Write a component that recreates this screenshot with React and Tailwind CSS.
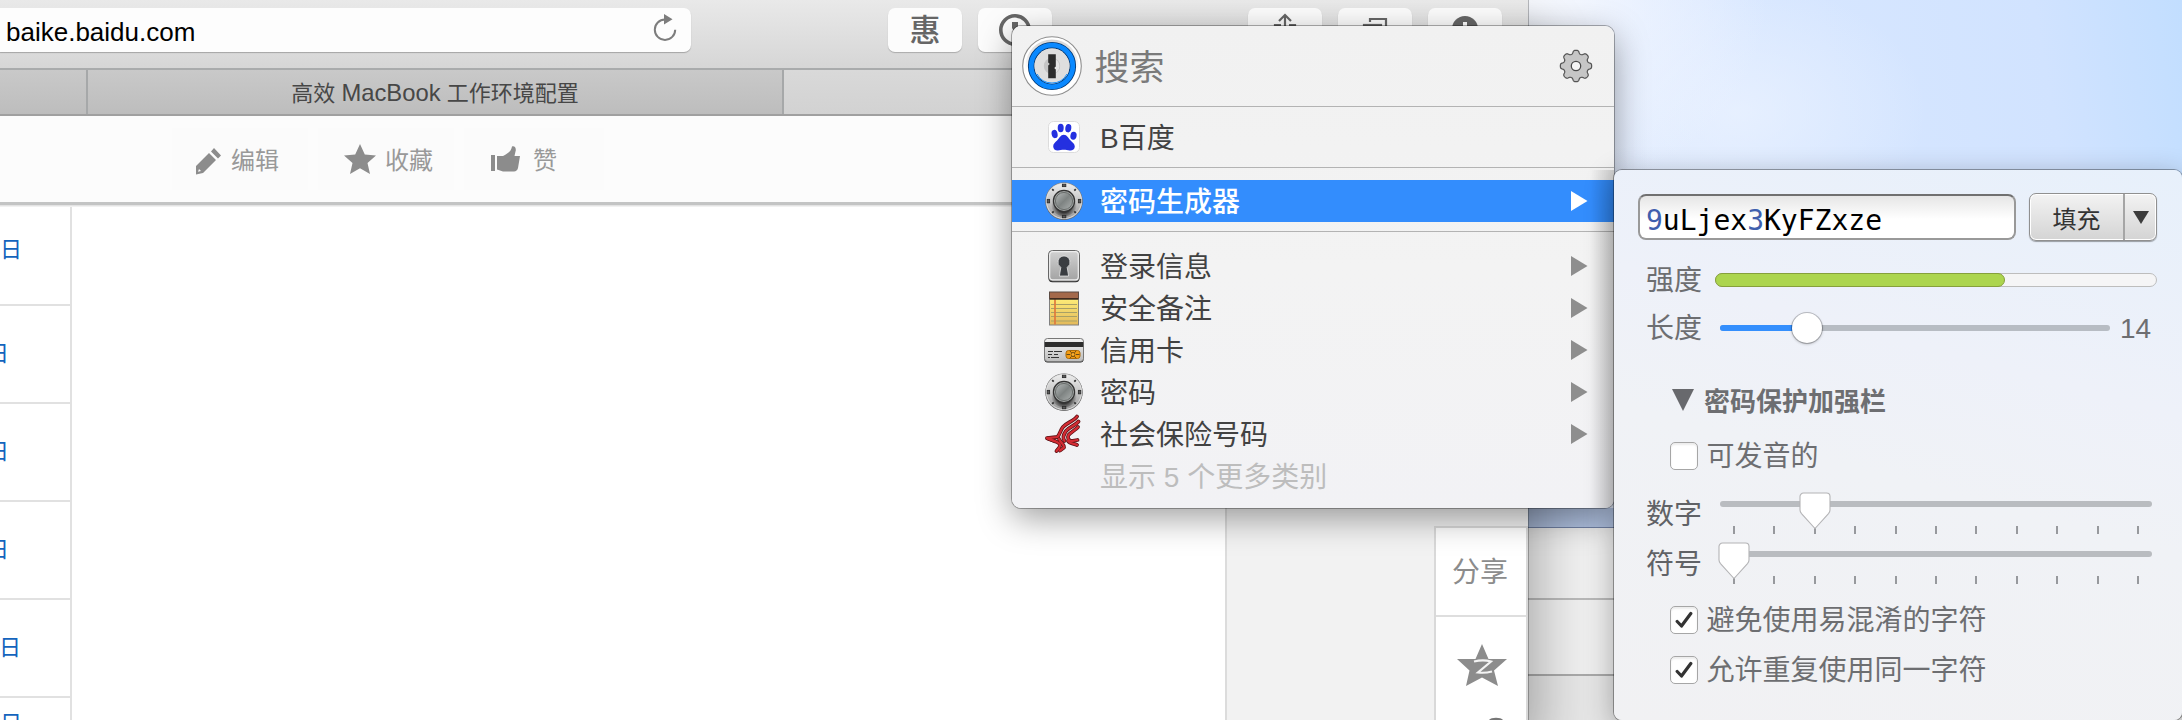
import React from 'react';

const DialIcon = () => (
  <svg width="40" height="40" viewBox="0 0 40 40">
    <defs>
      <linearGradient id="dialRim" x1="0" y1="0" x2="0" y2="1">
        <stop offset="0" stopColor="#ededed" />
        <stop offset="0.5" stopColor="#c6c6c6" />
        <stop offset="1" stopColor="#9a9a9a" />
      </linearGradient>
      <radialGradient id="dialShade" cx="0.5" cy="0.6" r="0.5">
        <stop offset="0.5" stopColor="#222" stopOpacity="0.85" />
        <stop offset="1" stopColor="#444" stopOpacity="0" />
      </radialGradient>
      <linearGradient id="dialKnob" x1="0" y1="0" x2="1" y2="1">
        <stop offset="0" stopColor="#b5b9b9" />
        <stop offset="0.5" stopColor="#7e8382" />
        <stop offset="1" stopColor="#adb1b0" />
      </linearGradient>
    </defs>
    <circle cx="20" cy="20.400" r="18.600" fill="#555" />
    <circle cx="20" cy="20" r="18.600" fill="#8f8f8f" />
    <circle cx="20" cy="20" r="17.600" fill="url(#dialRim)" stroke="#efefef" strokeWidth="0.8" />
    <ellipse cx="20" cy="23" rx="13" ry="12.500" fill="url(#dialShade)" />
    <g fill="#5a5a5a" stroke="#2e2e2e" strokeWidth="0.9">
      <rect x="18.400" y="3.200" width="3.400" height="2.400" />
      <rect x="18.400" y="34.400" width="3.400" height="2.400" />
      <rect x="3.200" y="18.400" width="2.400" height="3.400" />
      <rect x="34.400" y="18.400" width="2.400" height="3.400" />
    </g>
    <g stroke="#333" strokeWidth="1.800">
      <path d="M8.200 8.200l1.500 1.500M31.800 8.200L30.300 9.700M8.200 31.800L9.700 30.300M31.800 31.800L30.300 30.300" />
    </g>
    <circle cx="20" cy="20" r="10.600" fill="#a0a4a3" stroke="#333" strokeWidth="1.200" />
    <circle cx="20" cy="20" r="8.600" fill="url(#dialKnob)" stroke="#5d6160" strokeWidth="0.8" />
  </svg>
);

const LoginIcon = () => (
  <svg width="40" height="40" viewBox="0 0 40 40">
    <defs>
      <linearGradient id="loginBg" x1="0" y1="0" x2="0" y2="1">
        <stop offset="0" stopColor="#d2d2d2" />
        <stop offset="1" stopColor="#a2a2a2" />
      </linearGradient>
    </defs>
    <rect x="4.5" y="5.2" width="31" height="31" rx="4" fill="#222" />
    <rect x="4.5" y="4.5" width="31" height="30.6" rx="4" fill="url(#loginBg)" stroke="#666" />
    <rect x="5.7" y="5.7" width="28.6" height="28.2" rx="3" fill="none" stroke="#eee" strokeWidth="1.2" />
    <path d="M20 10a6.2 6.2 0 0 1 3.2 11.4L24.6 30h-9.2l1.4-8.6A6.2 6.2 0 0 1 20 10z" fill="#3a3d41" stroke="#f2f2f2" strokeWidth="0.7" />
  </svg>
);

const NoteIcon = () => (
  <svg width="40" height="40" viewBox="0 0 40 40">
    <defs>
      <linearGradient id="notePaper" x1="0" y1="0" x2="0" y2="1">
        <stop offset="0" stopColor="#fff07a" />
        <stop offset="1" stopColor="#e3b95b" />
      </linearGradient>
    </defs>
    <rect x="5.5" y="9" width="29" height="28" fill="url(#notePaper)" stroke="#808080" />
    <path d="M7 16.5h26M7 20.5h26M7 24.5h26M7 28.5h26M7 33h26" stroke="#a8a066" />
    <path d="M11 11v25.500" stroke="#e07a3c" strokeWidth="1.7" />
    <rect x="5.5" y="4" width="29" height="7" fill="#a4694b" stroke="#5b4a42" />
    <path d="M6 10.8h28" stroke="#2b1d15" strokeWidth="1.2" />
  </svg>
);

const CardIcon = () => (
  <svg width="40" height="40" viewBox="0 0 40 40">
    <defs>
      <linearGradient id="cardBg" x1="0" y1="0" x2="0" y2="1">
        <stop offset="0" stopColor="#f3f3f3" />
        <stop offset="1" stopColor="#bcbcbc" />
      </linearGradient>
    </defs>
    <rect x="0.5" y="9.500" width="39" height="23" rx="3" fill="#222" />
    <rect x="0.5" y="8.500" width="39" height="23" rx="3" fill="url(#cardBg)" stroke="#777" />
    <rect x="0.8" y="12" width="38.400" height="5" fill="#2d2d2d" />
    <path d="M4 21.500h5m1 0h8M4 24.500h4m2 0h4M4 27.500h2m1 0h8" stroke="#333" strokeWidth="1.200" />
    <rect x="22" y="20.500" width="14" height="8" rx="2.500" fill="#f39c12" stroke="#ad6b07" />
    <path d="M22.500 24.500h3.500m6 0h3.500M26 21l1.500 1.800h3L32 21M26 28.200l1.500-1.800h3l1.500 1.800" stroke="#6b4c18" strokeWidth="1" fill="none" />
    <circle cx="29" cy="24.500" r="1.900" fill="#ffb02e" stroke="#5e3c06" strokeWidth="0.7" />
  </svg>
);

const EAGLE_LINES = [
  'M33 2.500C30 7 23 8.500 19 13c-2.500 3-3 7-5.500 10L3 24.200l8 3',
  'M34.500 7.500C31 12 25 13 22 17c-3 4-3.500 7-1.500 10',
  'M34 13c-3 3.500-7 5-9.500 8-1.500 3 0 5.500 3 6.200l6-1.200',
  'M4 24.500L13 28c3 1.500 4 3 2 6l-2.500 3',
  'M15 25c2 4 5 5 5 8.500l-4 3M24 27c2 3 6 2.500 9 4',
];

const EagleIcon = () => (
  <svg width="40" height="40" viewBox="0 0 40 40">
    <g fill="none" strokeLinecap="round" strokeLinejoin="round">
      {EAGLE_LINES.map((d) => (
        <path key={d} d={d} stroke="#5d1216" strokeWidth="3.800" />
      ))}
      {EAGLE_LINES.map((d) => (
        <path key={d} d={d} stroke="#d42c33" strokeWidth="2.200" />
      ))}
    </g>
  </svg>
);

const PawIcon = () => (
  <svg width="32" height="32" viewBox="0 0 32 32">
    <rect x="0.5" y="0.5" width="31" height="31" rx="5" fill="#fff" stroke="#dcdcdc" />
    <g fill="#2430e0">
      <ellipse cx="12.700" cy="7" rx="3" ry="4.200" />
      <ellipse cx="20.300" cy="7.200" rx="3" ry="4.200" transform="rotate(8 20.3 7.200)" />
      <ellipse cx="6.600" cy="13" rx="3" ry="4.200" transform="rotate(-12 6.600 13)" />
      <ellipse cx="25.500" cy="14.800" rx="3.100" ry="4" transform="rotate(10 25.500 14.800)" />
      <path d="M15.800 13.800c3.400 0 4.200 3.200 6.800 5.600 2 2 4.200 3.400 4.200 6.100 0 3-2.500 4.200-5 4-2.300-.2-3.800-.7-6-.7s-3.900.7-6 .7c-2.800 0-4.600-1.400-4.600-4.200 0-2.700 2-4 3.900-5.900 2.500-2.400 3.400-5.600 6.700-5.600z" />
    </g>
  </svg>
);

const OnePasswordIcon = () => (
  <svg width="62" height="62" viewBox="0 0 62 62">
    <defs>
      <linearGradient id="opRim" x1="0" y1="0" x2="0" y2="1">
        <stop offset="0" stopColor="#d4d4d4" />
        <stop offset="0.6" stopColor="#fff" />
        <stop offset="1" stopColor="#fff" />
      </linearGradient>
    </defs>
    <circle cx="31" cy="31" r="29.300" fill="#fff" stroke="#8e8e8e" strokeWidth="1.100" />
    <circle cx="31" cy="31" r="26.500" fill="url(#opRim)" />
    <circle cx="31" cy="31" r="20.800" fill="#e2e2e2" stroke="#063a74" strokeWidth="6.600" />
    <circle cx="31" cy="31" r="20.800" fill="none" stroke="#0a89ff" strokeWidth="4.800" />
    <circle cx="31" cy="31" r="17.500" fill="#dedede" />
    <path d="M16 39a17 17 0 0 0 30 0" fill="none" stroke="#1690ff" strokeWidth="1" />
    <circle cx="31" cy="31" r="8.200" fill="#c4c4c4" />
    <path d="M31 23.500a7.500 7.500 0 0 1 0 15z" fill="#e4e4e4" />
    <path d="M27.200 19.200h7.600v12.300l-1.600 1.500 1.600 1.500v8.700h-7.600V30.500l1.600-1.500-1.600-1.500z" fill="#2c2c2c" />
  </svg>
);

const GearIcon = () => {
  const pts = [];
  for (let i = 0; i < 160; i += 1) {
    const a = (i / 160) * Math.PI * 2;
    const r = 14 + 1.700 * Math.tanh(1.800 * Math.cos(8 * a) + 0.3);
    pts.push(`${(17 + r * Math.sin(a)).toFixed(2)},${(17 - r * Math.cos(a)).toFixed(2)}`);
  }
  return (
    <svg width="34" height="34" viewBox="0 0 34 34">
      <polygon points={pts.join(' ')} fill="#c6c6c6" stroke="#555" strokeWidth="1.200" strokeLinejoin="round" />
      <circle cx="17" cy="17" r="4.700" fill="#f4f4f4" stroke="#4a4a4a" strokeWidth="1.300" />
    </svg>
  );
};

const ToolButton = ({ children }) => (
  <div className="flex h-11 w-[74px] justify-center rounded-[7px] bg-[#fcfcfc] shadow-[0_1px_1px_rgba(0,0,0,0.22)]">{children}</div>
);

const SafariToolbar = () => (
  <div className="flex h-[70px] items-start border-b-2 border-[#a9abac] bg-gradient-to-b from-[#e9e9e9] to-[#d6d6d6] pt-2">
    <div className="flex h-11 w-[691px] items-center justify-between rounded-r-[7px] bg-[#fdfdfd] pr-[13px] pl-[6px] shadow-[0_1px_1px_rgba(0,0,0,0.25)]">
      <span className="pt-[3px] text-[26px] leading-none text-black">baike.baidu.com</span>
      <svg className="-mt-1" width="26" height="30" viewBox="0 0 26 30" fill="none">
        <path d="M13 6.500a10.200 10.200 0 1 0 10.200 10.200" stroke="#7d7d7d" strokeWidth="2" />
        <path d="M12 1v10.500l8.500-5.200z" fill="#7d7d7d" />
      </svg>
    </div>
    <div className="ml-[197px] flex gap-4">
      <ToolButton>
        <span className="pt-[6px] text-[31px] leading-[34px] font-medium text-[#666]">惠</span>
      </ToolButton>
      <ToolButton>
        <svg width="36" height="44" viewBox="0 0 36 44">
          <circle cx="18" cy="22" r="14.200" fill="none" stroke="#666" strokeWidth="3.600" />
          <path d="M15 14h6v7l-1.500 1.500L21 24v6h-6v-6l1.500-1.500L15 20z" fill="#666" />
        </svg>
      </ToolButton>
    </div>
    <div className="ml-[196px] flex gap-4">
      <ToolButton>
        <svg width="30" height="44" viewBox="0 0 30 44" fill="none" stroke="#666" strokeWidth="2.200">
          <path d="M15 7v20M9 13l6-6 6 6M11 17H5v15h20V17h-6" />
        </svg>
      </ToolButton>
      <ToolButton>
        <svg width="30" height="44" viewBox="0 0 30 44" fill="none" stroke="#666" strokeWidth="2.200">
          <rect x="4" y="17" width="17" height="15" />
          <path d="M10 14v-3h16v14h-4" />
        </svg>
      </ToolButton>
      <ToolButton>
        <svg width="30" height="44" viewBox="0 0 30 44">
          <circle cx="15" cy="21" r="13" fill="#666" />
          <path d="M13 14h4v8h4l-6 6-6-6h4z" fill="#fff" />
        </svg>
      </ToolButton>
    </div>
  </div>
);

const TabBar = () => (
  <div className="flex h-[46px] border-b-2 border-[#a0a0a0] bg-gradient-to-b from-[#c9c9c9] to-[#bdbdbd]">
    <div className="w-[88px] border-r-2 border-[#a6a8a9]" />
    <div className="flex w-[696px] items-center justify-center border-r-2 border-[#a6a8a9] pt-[2px] text-[22px] text-[#474747]">
      <span>
        高效 <span className="text-[23.800px]">MacBook</span> 工作环境配置
      </span>
    </div>
    <div className="flex-1 bg-gradient-to-b from-[#d9d9d9] to-[#d2d2d2]" />
  </div>
);

const PageActions = () => (
  <div className="flex h-[86px] items-center gap-[10px] bg-[#fcfcfc] pl-[172px] text-[24px] text-[#999]">
    <div className="flex h-[62px] w-[136px] items-center gap-[9px] bg-[#fbfbfb] pt-[3px] pl-[22px]">
      <svg width="28" height="28" viewBox="0 0 28 28" fill="#8c8c8c">
        <path d="M2 19L15 6l7 7L9 26l-7 1.500zM17 4.500l3-3.500 7 7.500-3 3z" />
        <path d="M5 22l2 2-3 .8z" fill="#fafafa" />
      </svg>
      <span>编辑</span>
    </div>
    <div className="flex h-[62px] w-[136px] items-center gap-[9px] bg-[#fbfbfb] pt-[3px] pl-[26px]">
      <svg className="-mt-[3px]" width="32" height="30" viewBox="0 0 32 30" fill="#8c8c8c">
        <path d="M16 0l4.800 10.500L32 11.600l-8.500 7.500L26 30l-10-5.800L6 30l2.500-10.900L0 11.600l11.200-1.100z" />
      </svg>
      <span>收藏</span>
    </div>
    <div className="flex h-[62px] w-[140px] items-center gap-[13px] bg-[#fbfbfb] pt-[3px] pl-[27px]">
      <svg className="-mt-[3px]" width="29" height="28" viewBox="0 0 29 28" fill="#8c8c8c">
        <path d="M0 10h4v16H0zM6 11h6c4-2 8-4 9-9.500 3-1 4.500 2 3.500 5L23.500 11H29l-2 12c-.5 2-2 3.500-4 3.500H12l-6-2z" />
      </svg>
      <span>赞</span>
    </div>
  </div>
);

const DateCell = ({ height, pad, left }) => (
  <div className={`flex shrink-0 overflow-hidden border-b-2 border-[#e1e1e1] text-[22px] leading-[26px] text-[#1464bd] ${height} ${pad}`}>
    <span className={left}>日</span>
  </div>
);

const BrowserWindow = () => (
  <div className="relative z-10 flex h-[720px] w-[1528px] shrink-0 flex-col overflow-hidden bg-white shadow-[0_0_0_1px_rgba(0,0,0,0.25),10px_30px_50px_rgba(0,0,0,0.3)]">
    <SafariToolbar />
    <TabBar />
    <PageActions />
    <div className="h-[3px] shrink-0 bg-[#c3c4c4]" />
    <div className="h-[2px] shrink-0 bg-gradient-to-b from-[#dcdcdc] to-[#f8f8f8]" />
    <div className="flex min-h-0 flex-1">
      <div className="flex w-[72px] shrink-0 flex-col overflow-hidden border-r-2 border-[#e1e1e1]">
        <DateCell height="h-[99px]" pad="pt-[30px]" left="" />
        <DateCell height="h-[98px]" pad="pt-[35px]" left="-ml-[13px]" />
        <DateCell height="h-[98px]" pad="pt-[35px]" left="-ml-[13px]" />
        <DateCell height="h-[98px]" pad="pt-[35px]" left="-ml-[13px]" />
        <DateCell height="h-[98px]" pad="pt-[35px]" left="-ml-px" />
        <DateCell height="h-[98px]" pad="pt-[13px]" left="" />
      </div>
      <div className="w-[1153px] shrink-0" />
      <div className="flex flex-1 justify-end border-l-2 border-[#dcdcdc] bg-[#f2f2f2] pt-[319px]">
        <div className="flex w-[94px] flex-col items-center border-2 border-b-0 border-[#d9d9d9] bg-white">
          <div className="flex h-[89px] w-full shrink-0 items-center justify-center border-b-2 border-[#dedede] pt-[2px] pr-[2px] text-[28px] text-[#8c8c8c]">
            <span>分享</span>
          </div>
          <svg className="mt-[27px] ml-[2px] shrink-0" width="52" height="76" viewBox="0 0 52 76">
            <path d="M26 0l6.500 15H51l-13 11.500L42 42l-16-8.500L10 42l3.500-15.500L1 15h18.500z" fill="#8c8c8c" />
            <path d="M18 17.500c6-1.500 12-1.500 17 0L22 28.500c5 .6 9 .3 14-1" fill="none" stroke="#f4f4f4" strokeWidth="2.200" />
            <path d="M33 76c2-3 12-3 14 0z" fill="#777" />
          </svg>
        </div>
      </div>
    </div>
  </div>
);

const RearWindow = () => (
  <div className="flex w-[654px] flex-col">
    <div className="h-[508px] bg-[radial-gradient(ellipse_240px_200px_at_0%_0%,#f8faff_0%,rgba(240,245,255,0.6)_50%,transparent_100%),radial-gradient(ellipse_190px_130px_at_32%_22%,rgba(236,243,255,0.7),transparent),linear-gradient(80deg,#eaf0fe_0%,#d8e7ff_40%,#d1e3ff_80%,#c2deff_100%)]" />
    <div className="h-5 border-b border-[#7485a9] bg-[#b4c6e6]" />
    <div className="h-[72px] border-b-2 border-[#b9b9b9] bg-[#f0f0f0]" />
    <div className="h-[76px] border-b-2 border-[#a9a9a9] bg-[#efefef]" />
    <div className="flex-1 bg-[#e6e6e6]" />
  </div>
);

const Arrow = ({ color }) => (
  <svg width="17" height="20" viewBox="0 0 17 20">
    <path d="M0 0l16.500 10L0 20z" fill={color} />
  </svg>
);

const MenuRow = ({ icon, label }) => (
  <div className="flex h-[42px] items-center pr-[26px] pl-8 text-[#424242]">
    <div className="flex w-10 justify-center">{icon}</div>
    <span className="ml-[16px] flex-1 pt-[3px]">{label}</span>
    <Arrow color="#8e8e8e" />
  </div>
);

const MainMenu = () => (
  <div className="absolute top-[26px] left-[1012px] z-20 h-[482px] w-[602px] overflow-hidden rounded-[9px] bg-[linear-gradient(#f1f1f1,#f3f3f3_50%,#f2f2f5)] text-[28px] leading-none">
    <div className="flex h-[81px] items-center border-b border-[#b3b3b3] pr-[21px] pl-[9px]">
      <OnePasswordIcon />
      <span className="ml-[11.500px] flex-1 pt-[3px] text-[35px] text-[#7a7a7a]">搜索</span>
      <GearIcon />
    </div>
    <div className="flex h-[61px] items-center border-b border-[#b3b3b3] pl-8 text-[#424242]">
      <div className="flex w-10 justify-center">
        <PawIcon />
      </div>
      <span className="ml-[16px] pt-[3px]">B百度</span>
    </div>
    <div className="h-16 border-b border-[#b3b3b3] pt-3">
      <div className="flex h-[42px] items-center bg-[#338dfd] pr-[26px] pl-8 font-medium text-white">
        <DialIcon />
        <span className="ml-[16px] flex-1 pt-[3px]">密码生成器</span>
        <Arrow color="#ffffff" />
      </div>
    </div>
    <div className="pt-[13px]">
      <MenuRow icon={<LoginIcon />} label="登录信息" />
      <MenuRow icon={<NoteIcon />} label="安全备注" />
      <MenuRow icon={<CardIcon />} label="信用卡" />
      <MenuRow icon={<DialIcon />} label="密码" />
      <MenuRow icon={<EagleIcon />} label="社会保险号码" />
      <div className="flex h-[42px] items-center pt-[3px] pl-[88px] text-[#bdbdbd]">显示 5 个更多类别</div>
    </div>
    <div className="absolute top-[144px] right-0 bottom-0 w-6 bg-gradient-to-r from-transparent to-black/15" />
  </div>
);

const MenuShadow = () => (
  <div className="absolute top-[26px] left-[1012px] z-10 h-[482px] w-[602px] rounded-[9px] shadow-[0_0_0_1px_rgba(0,0,0,0.3),0_10px_34px_rgba(0,0,0,0.38)]" />
);

const CheckRow = ({ checked, label, className }) => (
  <div className={`flex h-7 items-center pl-14 ${className}`}>
    <div className="flex h-7 w-7 items-center justify-center rounded-[5px] border border-[#a6a6a6] bg-white shadow-[inset_0_2px_2px_rgba(0,0,0,0.08)]">
      {checked && (
        <svg width="18" height="18" viewBox="0 0 18 18">
          <path d="M2.200 10.500l4.300 4.500L15.800 2.500" fill="none" stroke="#333" strokeWidth="3.200" strokeLinecap="round" strokeLinejoin="round" />
        </svg>
      )}
    </div>
    <span className="ml-[8.500px] pt-[2px]">{label}</span>
  </div>
);

const TICKS = Array.from({ length: 11 }, (_, i) => i);

const TickSlider = ({ label, value, className }) => (
  <div className={`flex h-[50px] pl-8 ${className}`}>
    <span className="w-[74px] pt-[9px] text-[#606266]">{label}</span>
    <div className="relative w-[432px] pt-[9px]">
      <div className="h-[6px] rounded-full bg-[#b9bcc0]" />
      <div className="mt-[19px] flex justify-between pr-[13px] pl-[13px]">
        {TICKS.map((t) => (
          <div key={t} className="h-2 w-[2px] bg-[#97999d]" />
        ))}
      </div>
      <svg className="absolute -top-px" style={{ left: value * 40.400 - 4 }} width="36" height="40" viewBox="0 0 36 40">
        <path d="M6.500 2h23a3.500 3.500 0 0 1 3.500 3.500V19c0 1.500-.6 2.500-1.500 3.600L18 37.500 4.500 22.600C3.600 21.500 3 20.500 3 19V5.500A3.500 3.500 0 0 1 6.500 2z" fill="#fff" stroke="#b4b4b6" strokeWidth="1.100" />
      </svg>
    </div>
  </div>
);

const GeneratorPanel = () => (
  <div className="absolute top-[170px] left-[1614px] z-30 flex h-[550px] w-[568px] flex-col rounded-[8px] bg-[linear-gradient(15deg,#f1f1f3_0%,#f0f2f6_45%,#eef1f9_65%,#e7f0fb_100%)] text-[28px] leading-none text-[#6d6e71] shadow-[0_0_0_1px_rgba(0,0,0,0.33),0_8px_30px_rgba(0,0,0,0.32)]">
    <div className="flex items-start pt-[23px] pl-6">
      <div className="mt-px flex h-[46px] w-[378px] items-center rounded-[8px] border-2 border-t-[#707070] border-r-[#999] border-b-[#999] border-l-[#999] bg-[linear-gradient(#e6e6e6,#fff_55%)] pt-[7px] pl-[6px] font-['DejaVu_Sans_Mono',monospace] text-[28px] text-black">
        <span className="text-[#3f5fae]">9</span>uLjex<span className="text-[#3f5fae]">3</span>KyFZxze
      </div>
      <div className="ml-[13px] flex h-12 w-[128px] rounded-[7px] border border-[#909090] bg-gradient-to-b from-[#f3f3f3] to-[#d4d4d4] text-[24px] text-[#333] shadow-[inset_0_0_0_1px_#fff,0_1px_1px_rgba(0,0,0,0.35)]">
        <div className="flex w-[95px] items-center justify-center border-r-2 border-[#a5a5a5] pt-[5px]">填充</div>
        <div className="flex flex-1 items-center justify-center pt-[2px]">
          <svg width="16" height="14" viewBox="0 0 16 14">
            <path d="M0 0h16L8 13z" fill="#3c3c3c" />
          </svg>
        </div>
      </div>
    </div>
    <div className="mt-[25px] flex h-[28px] items-center pl-8">
      <span className="w-[69px] pt-[2px]">强度</span>
      <div className="h-[14px] w-[442px] rounded-full border border-[#bdbdbd] bg-[#f5f5f6]">
        <div className="-mt-px -ml-px h-[14px] w-[290px] rounded-full border border-[#86a03c] bg-[#acd54e]" />
      </div>
    </div>
    <div className="mt-[20px] flex h-[28px] items-center pl-8">
      <span className="w-[74px] pt-[2px]">长度</span>
      <div className="relative flex h-[6px] w-[390px] items-center rounded-full bg-[#b7bcc3]">
        <div className="h-[6px] w-[80px] rounded-l-full bg-[#348ffd]" />
        <div className="absolute left-[72px] h-[30px] w-[30px] rounded-full bg-white shadow-[0_0_0_1px_rgba(0,0,0,0.2),0_1px_3px_rgba(0,0,0,0.3)]" />
      </div>
      <span className="ml-[10px] pt-[2px]">14</span>
    </div>
    <div className="mt-[44px] flex h-[28px] items-center pl-[58px] text-[26px] font-bold">
      <svg width="22" height="22" viewBox="0 0 22 22">
        <path d="M0 0h22L11 22z" fill="#68696d" />
      </svg>
      <span className="ml-[10px] pt-[3px]">密码保护加强栏</span>
    </div>
    <CheckRow label="可发音的" className="mt-[28px]" />
    <TickSlider label="数字" value={2} className="mt-[22px]" />
    <TickSlider label="符号" value={0} className="" />
    <CheckRow checked label="避免使用易混淆的字符" className="mt-[14px]" />
    <CheckRow checked label="允许重复使用同一字符" className="mt-[22px]" />
  </div>
);

export default function App() {
  return (
    <div className="relative flex h-[720px] w-[2182px] overflow-hidden bg-white font-['Liberation_Sans','Noto_Sans_CJK_SC',sans-serif] whitespace-nowrap">
      <BrowserWindow />
      <RearWindow />
      <MenuShadow />
      <GeneratorPanel />
      <MainMenu />
    </div>
  );
}
